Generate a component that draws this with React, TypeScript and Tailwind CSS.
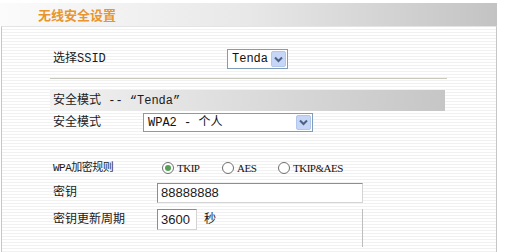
import React from "react";

const font = { fontFamily: '"Liberation Mono", "Noto Sans CJK SC", monospace' };

const Chevron = () => (
	<svg width="9" height="7" viewBox="0 0 9 7">
		<path d="M1 1.5 L4.5 5 L8 1.5" fill="none" stroke="#4d6185" strokeWidth="2" />
	</svg>
);

const FakeSelect = ({ value, width }: { value: string; width: string }) => (
	<div className={`flex h-full items-stretch border border-[#7f9db9] bg-white ${width}`}>
		<div className="flex flex-1 items-center pl-[4px] text-[12px] text-[#111]">{value}</div>
		<div className="m-[1px] flex w-[15px] items-center justify-center rounded-[2px] bg-[#c6d6f6] border border-[#b3c6ec]">
			<Chevron />
		</div>
	</div>
);

const Radio = ({ label, checked, width }: { label: string; checked?: boolean; width: string }) => (
	<div className={`flex items-center ${width}`}>
		<span className="flex h-[12px] w-[12px] items-center justify-center rounded-full border border-[#6f6f6f] bg-white">
			{checked && <span className="h-[6px] w-[6px] rounded-full bg-[#55a055]"></span>}
		</span>
		<span className="ml-[3px] text-[11px] text-[#111] tracking-[-0.5px]" style={{ fontFamily: '"Liberation Serif", serif' }}>{label}</span>
	</div>
);

const App = () => {
	return (
		<div className="relative h-[252px] w-[505px] overflow-hidden bg-white text-[#1a1a1a]" style={font}>
			<div className="mt-[3px] flex h-[23px] w-[497px] items-center bg-linear-to-r from-[#fbfbfb] via-[#e8e8e8] to-[#c3c3c3] pl-[38px]">
				<span className="text-[13px] font-bold text-[#e8952f]" style={{ fontFamily: '"Noto Sans CJK SC", sans-serif' }}>
					无线安全设置
				</span>
			</div>
			<div className="ml-[1px] flex h-[226px] w-[496px] flex-col border-l border-r border-t border-[#c6c6c6] border-t-[#e4e4e4] bg-[repeating-linear-gradient(180deg,#ffffff_0px,#ffffff_2px,#f1f1f1_2px,#f1f1f1_3px)] pl-[48px]">
				<div className="mt-[22px] flex h-[20px] items-center pl-[3px]">
					<div className="w-[174px] text-[12px]">选择SSID</div>
					<FakeSelect value="Tenda" width="w-[61px]" />
				</div>
				<div className="mt-[9px] h-[2px] w-[397px] border-t border-[#c9c9bd] bg-white"></div>
				<div className="mt-[10px] flex h-[21px] w-[395px] items-center bg-linear-to-r from-[#f2f2f2] to-[#c6c6c6] pl-[3px] text-[12px]">
					安全模式 -- “Tenda”
				</div>
				<div className="mt-[2px] flex h-[19px] items-center pl-[3px]">
					<div className="w-[90px] text-[12px]">安全模式</div>
					<FakeSelect value="WPA2 - 个人" width="w-[170px]" />
				</div>
				<div className="mt-[28px] flex h-[16px] items-center pl-[3px]">
					<div className="w-[109px] text-[11px] tracking-[-0.5px]">WPA加密规则</div>
					<Radio label="TKIP" checked width="w-[60px]" />
					<Radio label="AES" width="w-[56px]" />
					<Radio label="TKIP&AES" width="w-[80px]" />
				</div>
				<div className="mt-[7px] flex h-[20px] items-center pl-[3px]">
					<div className="w-[104px] text-[12px]">密钥</div>
					<div className="flex h-full w-[206px] items-center border border-[#8e8e8e] border-b-[#d4d4d4] border-r-[#d4d4d4] bg-white pl-[3px] text-[13px]" style={{ fontFamily: '"Liberation Sans", sans-serif' }}>
						88888888
					</div>
				</div>
				<div className="mt-[6px] flex h-[38px] items-start pl-[3px]">
					<div className="flex h-[21px] w-[104px] items-center text-[12px]">密钥更新周期</div>
					<div className="flex h-[38px] w-[206px] items-start border-r border-[#bdbdbd]">
						<div className="flex h-[21px] w-[40px] items-center border border-[#8e8e8e] border-b-[#d4d4d4] border-r-[#d4d4d4] bg-white pl-[3px] text-[13px]" style={{ fontFamily: '"Liberation Sans", sans-serif' }}>
							3600
						</div>
						<div className="ml-[7px] flex h-[21px] items-center text-[12px]">秒</div>
					</div>
				</div>
			</div>
		</div>
	);
};

export default App;
